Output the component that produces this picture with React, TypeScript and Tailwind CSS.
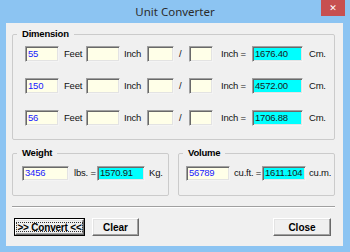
import React from "react";

const sunkenBase =
  "h-full flex items-center pl-[2px] border border-t-[#a0a0a0] border-l-[#a0a0a0] border-b-[#f4f4f4] border-r-[#f4f4f4] shadow-[inset_1px_1px_0_#696969,inset_-1px_-1px_0_#e3e3e3] overflow-hidden whitespace-nowrap";

function Box({ w, value, cyan }: { w: string; value?: string; cyan?: boolean }) {
  return (
    <div
      className={`${sunkenBase} ${w} ${cyan ? "bg-[#00ffff] text-[#1a1a1a]" : "bg-[#ffffe8] text-[#2020ff]"}`}
    >
      {value}
    </div>
  );
}

function Legend({ children }: { children: React.ReactNode }) {
  return (
    <legend className="ml-[4px] px-[5px] font-bold leading-[14px] text-black">{children}</legend>
  );
}

function DimRow({ value, result }: { value: string; result: string }) {
  return (
    <div className="flex items-center h-[16px]">
      <Box w="w-[34px]" value={value} />
      <span className="w-[27px] pl-[5px]">Feet</span>
      <Box w="w-[34px]" />
      <span className="w-[27px] pl-[4px]">Inch</span>
      <Box w="w-[27px]" />
      <span className="w-[15px] pl-[5px]">/</span>
      <Box w="w-[24px]" />
      <span className="w-[39px] pl-[8px] whitespace-nowrap">Inch =</span>
      <Box w="w-[51px]" value={result} cyan />
      <span className="pl-[6px]">Cm.</span>
    </div>
  );
}

const raised =
  "h-full flex items-center justify-center font-bold text-[10px] tracking-normal text-black bg-[#f0f0f0] border border-t-white border-l-white border-b-[#696969] border-r-[#696969] shadow-[inset_-1px_-1px_0_#a0a0a0,inset_1px_1px_0_#e3e3e3] whitespace-nowrap";

export default function App() {
  return (
    <div className="w-[350px] h-[252px] overflow-hidden bg-[#8cc4f2] flex flex-col font-['Liberation_Sans',Arial,sans-serif] text-[9.5px] tracking-[-0.2px] text-[#111]">
      {/* Title bar */}
      <div className="h-[23px] shrink-0 grid grid-cols-[1fr_auto_1fr]">
        <div />
        <div className="font-['Noto_Sans',sans-serif] text-[11.5px] tracking-normal text-[#2b2b2b] leading-[23px] pb-[1px]">
          Unit Converter
        </div>
        <div className="flex justify-end pr-[5px]">
          <div className="w-[24px] h-[16px] bg-[#c75050] flex items-center justify-center text-white text-[9px] font-bold font-['DejaVu_Sans',sans-serif] leading-none">
            ✕
          </div>
        </div>
      </div>

      {/* Client */}
      <div className="ml-[6px] w-[337px] h-[223px] shrink-0 bg-[#f0f0f0] pt-[4px] pl-[6px] pr-[8px] flex flex-col">
        <fieldset className="border border-[#cbcbcb] rounded-[2px]">
          <Legend>Dimension</Legend>
          <div className="pl-[12px] pt-[5px] pb-[13px] flex flex-col gap-[16px]">
            <DimRow value="55" result="1676.40" />
            <DimRow value="150" result="4572.00" />
            <DimRow value="56" result="1706.88" />
          </div>
        </fieldset>

        <div className="mt-[6px] flex gap-[9px]">
          <fieldset className="flex-1 border border-[#cbcbcb] rounded-[2px]">
            <Legend>Weight</Legend>
            <div className="pl-[9px] pt-[6px] pb-[14px]">
              <div className="flex items-center h-[15px]">
                <Box w="w-[47px]" value="3456" />
                <span className="w-[28px] pl-[5px] whitespace-nowrap">lbs. =</span>
                <Box w="w-[48px]" value="1570.91" cyan />
                <span className="pl-[4px]">Kg.</span>
              </div>
            </div>
          </fieldset>
          <fieldset className="flex-1 border border-[#cbcbcb] rounded-[2px]">
            <Legend>Volume</Legend>
            <div className="pl-[7px] pt-[6px] pb-[14px]">
              <div className="flex items-center h-[15px]">
                <Box w="w-[44px]" value="56789" />
                <span className="w-[32px] pl-[4px] whitespace-nowrap">cu.ft. =</span>
                <Box w="w-[44px]" value="1611.104" cyan />
                <span className="pl-[3px] whitespace-nowrap">cu.m.</span>
              </div>
            </div>
          </fieldset>
        </div>

        <div className="mt-[10px] h-[2px] border-t border-t-[#a0a0a0] border-b border-b-white" />

        <div className="mt-[10px] h-[18px] flex">
          <div className="ml-[2px] w-[71px] h-full border border-black">
            <div className={`${raised} p-[2px]`}>
              <div className="flex-1 self-stretch flex items-center justify-center border border-dotted border-[#333] tracking-[-0.2px]">
                &gt;&gt; Convert &lt;&lt;
              </div>
            </div>
          </div>
          <div className="ml-[7px] w-[47px] h-full">
            <div className={raised}>Clear</div>
          </div>
          <div className="ml-auto mr-[4px] w-[58px] h-full">
            <div className={raised}>Close</div>
          </div>
        </div>
      </div>
    </div>
  );
}
